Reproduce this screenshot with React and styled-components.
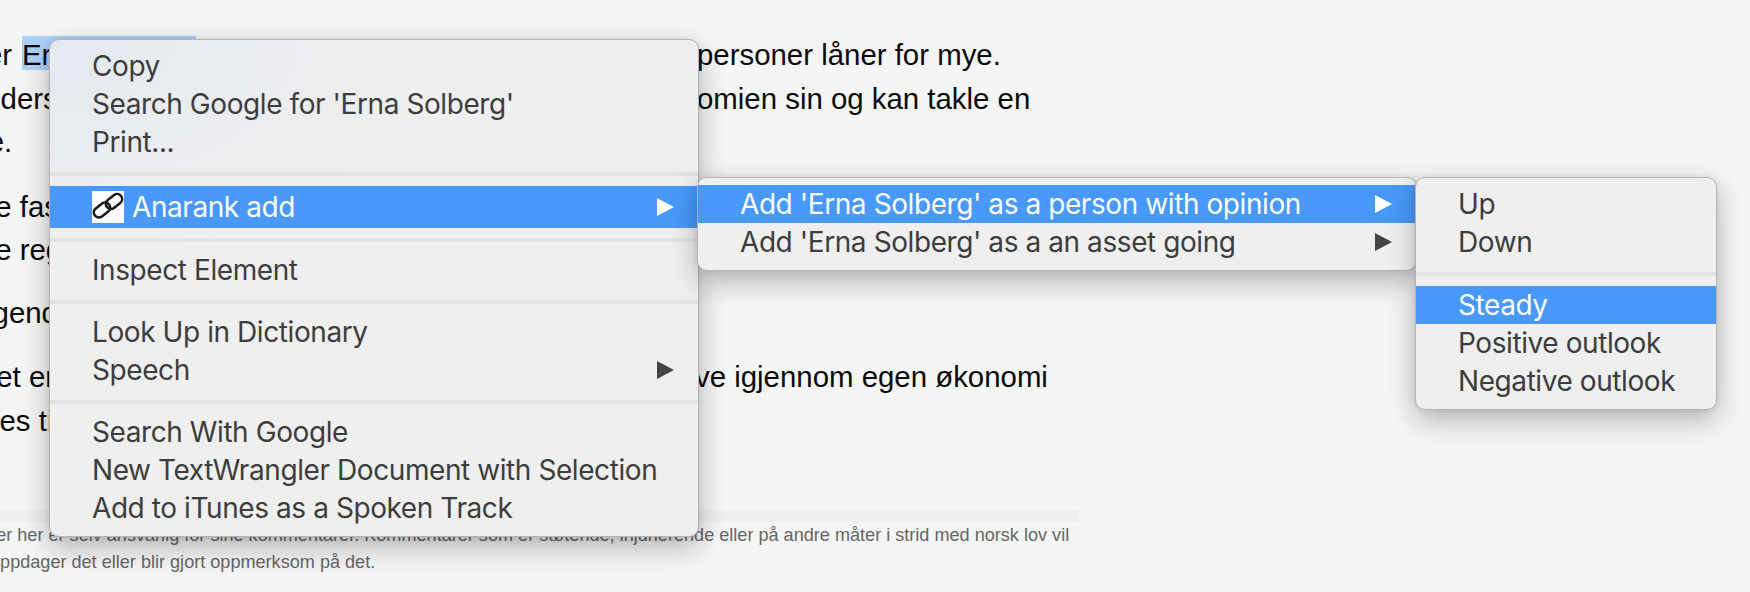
import React from 'react';
import styled, { createGlobalStyle } from 'styled-components';

const GlobalStyle = createGlobalStyle`
  html, body { margin: 0; padding: 0; height: 592px; overflow: hidden; background: #f5f5f5; }
  body { font-family: "Liberation Sans", Arial, sans-serif; }
`;

const Page = styled.div`
  position: relative;
  width: 1750px;
  height: 592px;
  overflow: hidden;
  background: #f5f5f5;
`;

const Article = styled.article`
  padding-top: 33px;
  margin-left: -14px;
  font-size: 29.4px;
  line-height: 43.5px;
  color: #0a0a0a;
`;

const Paragraph = styled.p`
  margin: 0 0 ${(p) => p.$gap ?? 21}px;
`;

const Line = styled.div`
  display: flex;
  white-space: pre;
  margin-left: ${(p) => p.$shift ?? 0}px;
`;

const Covered = styled.span`
  display: inline-block;
  width: ${(p) => p.$w}px;
  overflow: hidden;
`;

const Selected = styled.span`
  align-self: flex-start;
  width: 174px;
  height: 34px;
  margin-top: 3px;
  background: #aed1f8;
  line-height: 38px;
  overflow: hidden;
`;

const Footer = styled.footer`
  position: absolute;
  top: 510px;
  left: 0;
`;

const FooterBar = styled.div`
  width: 1078px;
  height: 12px;
  background: #f0efed;
`;

const FooterText = styled.div`
  font-size: 18.1px;
  line-height: 27px;
  color: #666;
`;

const Menu = styled.div`
  position: absolute;
  left: ${(p) => p.$x}px;
  top: ${(p) => p.$y}px;
  width: ${(p) => p.$w}px;
  box-sizing: border-box;
  padding: 7px 0 9px;
  background: ${(p) => p.$tint
    ? 'radial-gradient(ellipse 380px 220px at 0 0, #e4e9f0 0%, #efefef 100%)'
    : '#efefef'};
  border: 1px solid #b4b4b4;
  border-radius: 10px;
  box-shadow: 0 10px 28px rgba(0, 0, 0, 0.28), 0 0 6px rgba(0, 0, 0, 0.08);
  font-family: Inter, "Noto Sans", sans-serif;
  font-size: 28px;
  color: #3d3d3d;
`;

const Item = styled.div`
  display: flex;
  align-items: center;
  height: ${(p) => (p.$tall ? 42 : 38)}px;
  padding: 0 24px 0 42px;
  white-space: nowrap;
  background: ${(p) => (p.$active ? '#4899fb' : 'transparent')};
  color: ${(p) => (p.$active ? '#fff' : 'inherit')};
`;

const Label = styled.span`
  flex: 1;
  letter-spacing: -0.42px;
`;

const Arrow = styled.span`
  width: 0;
  height: 0;
  border-top: 9.5px solid transparent;
  border-bottom: 9.5px solid transparent;
  border-left: 17px solid ${(p) => (p.$active ? '#fff' : '#444')};
`;

const Separator = styled.div`
  height: 4px;
  margin: ${(p) => p.$before ?? 11}px 0 ${(p) => p.$after ?? 9}px;
  background: #e2e2e2;
`;

const IconBox = styled.span`
  display: flex;
  width: 32px;
  height: 32px;
  margin-right: 8px;
  background: #fff;
`;

const ChainIcon = () => (
  <svg width="32" height="32" viewBox="0 0 32 32" fill="none" stroke="#1a1a1a" strokeWidth="2.6">
    <rect x="1" y="14" width="18" height="10" rx="5" transform="rotate(-38 10 19)" />
    <rect x="13" y="5.5" width="18" height="10" rx="5" transform="rotate(-38 22 10.5)" />
  </svg>
);

const App = () => (
  <Page>
    <GlobalStyle />
    <Article>
      <Paragraph>
        <Line>
          <Covered $w={36}>er </Covered>
          <Selected>Erna Solberg</Selected>
          <Covered $w={501}>advarer om at mange</Covered>
          personer låner for mye.
        </Line>
        <Line $shift={-23}>
          <Covered $w={734}>Undersøkelsen viser at mange har god kontroll på øk</Covered>
          omien sin og kan takle en
        </Line>
        <Line $shift={-44}>krise.</Line>
      </Paragraph>
      <Paragraph $gap={19}>
        <Line $shift={-12}>De fast ansatte får hjelp</Line>
        <Line $shift={-12}>De regner med at det går bra</Line>
      </Paragraph>
      <Paragraph>
        <Line $shift={-31}>Ungende</Line>
      </Paragraph>
      <Paragraph>
        <Line $shift={-11}>
          <Covered $w={720}>Det er viktig at folk lærer seg å ta ansvar for å ha</Covered>
          ve igjennom egen økonomi
        </Line>
        <Line $shift={-11}>Ines til slutt</Line>
      </Paragraph>
    </Article>

    <Footer>
      <FooterBar />
      <FooterText>
        <Line $shift={-41}>skriver her er selv ansvarlig for sine kommentarer. Kommentarer som er støtende, injurierende eller på andre måter i strid med norsk lov vil</Line>
        <Line $shift={-10}>oppdager det eller blir gjort oppmerksom på det.</Line>
      </FooterText>
    </Footer>

    <Menu $x={49} $y={39} $w={650} $tint>
      <Item><Label>Copy</Label></Item>
      <Item><Label>Search Google for 'Erna Solberg'</Label></Item>
      <Item><Label>Print...</Label></Item>
      <Separator $after={10} />
      <Item $tall $active>
        <IconBox><ChainIcon /></IconBox>
        <Label>Anarank add</Label>
        <Arrow $active />
      </Item>
      <Separator $before={10} />
      <Item><Label>Inspect Element</Label></Item>
      <Separator />
      <Item><Label>Look Up in Dictionary</Label></Item>
      <Item><Label>Speech</Label><Arrow /></Item>
      <Separator />
      <Item><Label>Search With Google</Label></Item>
      <Item><Label>New TextWrangler Document with Selection</Label></Item>
      <Item><Label>Add to iTunes as a Spoken Track</Label></Item>
    </Menu>

    <Menu $x={697} $y={177} $w={720}>
      <Item $active><Label>Add 'Erna Solberg' as a person with opinion</Label><Arrow $active /></Item>
      <Item><Label>Add 'Erna Solberg' as a an asset going</Label><Arrow /></Item>
    </Menu>

    <Menu $x={1415} $y={177} $w={302}>
      <Item><Label>Up</Label></Item>
      <Item><Label>Down</Label></Item>
      <Separator $after={10} />
      <Item $active><Label>Steady</Label></Item>
      <Item><Label>Positive outlook</Label></Item>
      <Item><Label>Negative outlook</Label></Item>
    </Menu>
  </Page>
);

export default App;
